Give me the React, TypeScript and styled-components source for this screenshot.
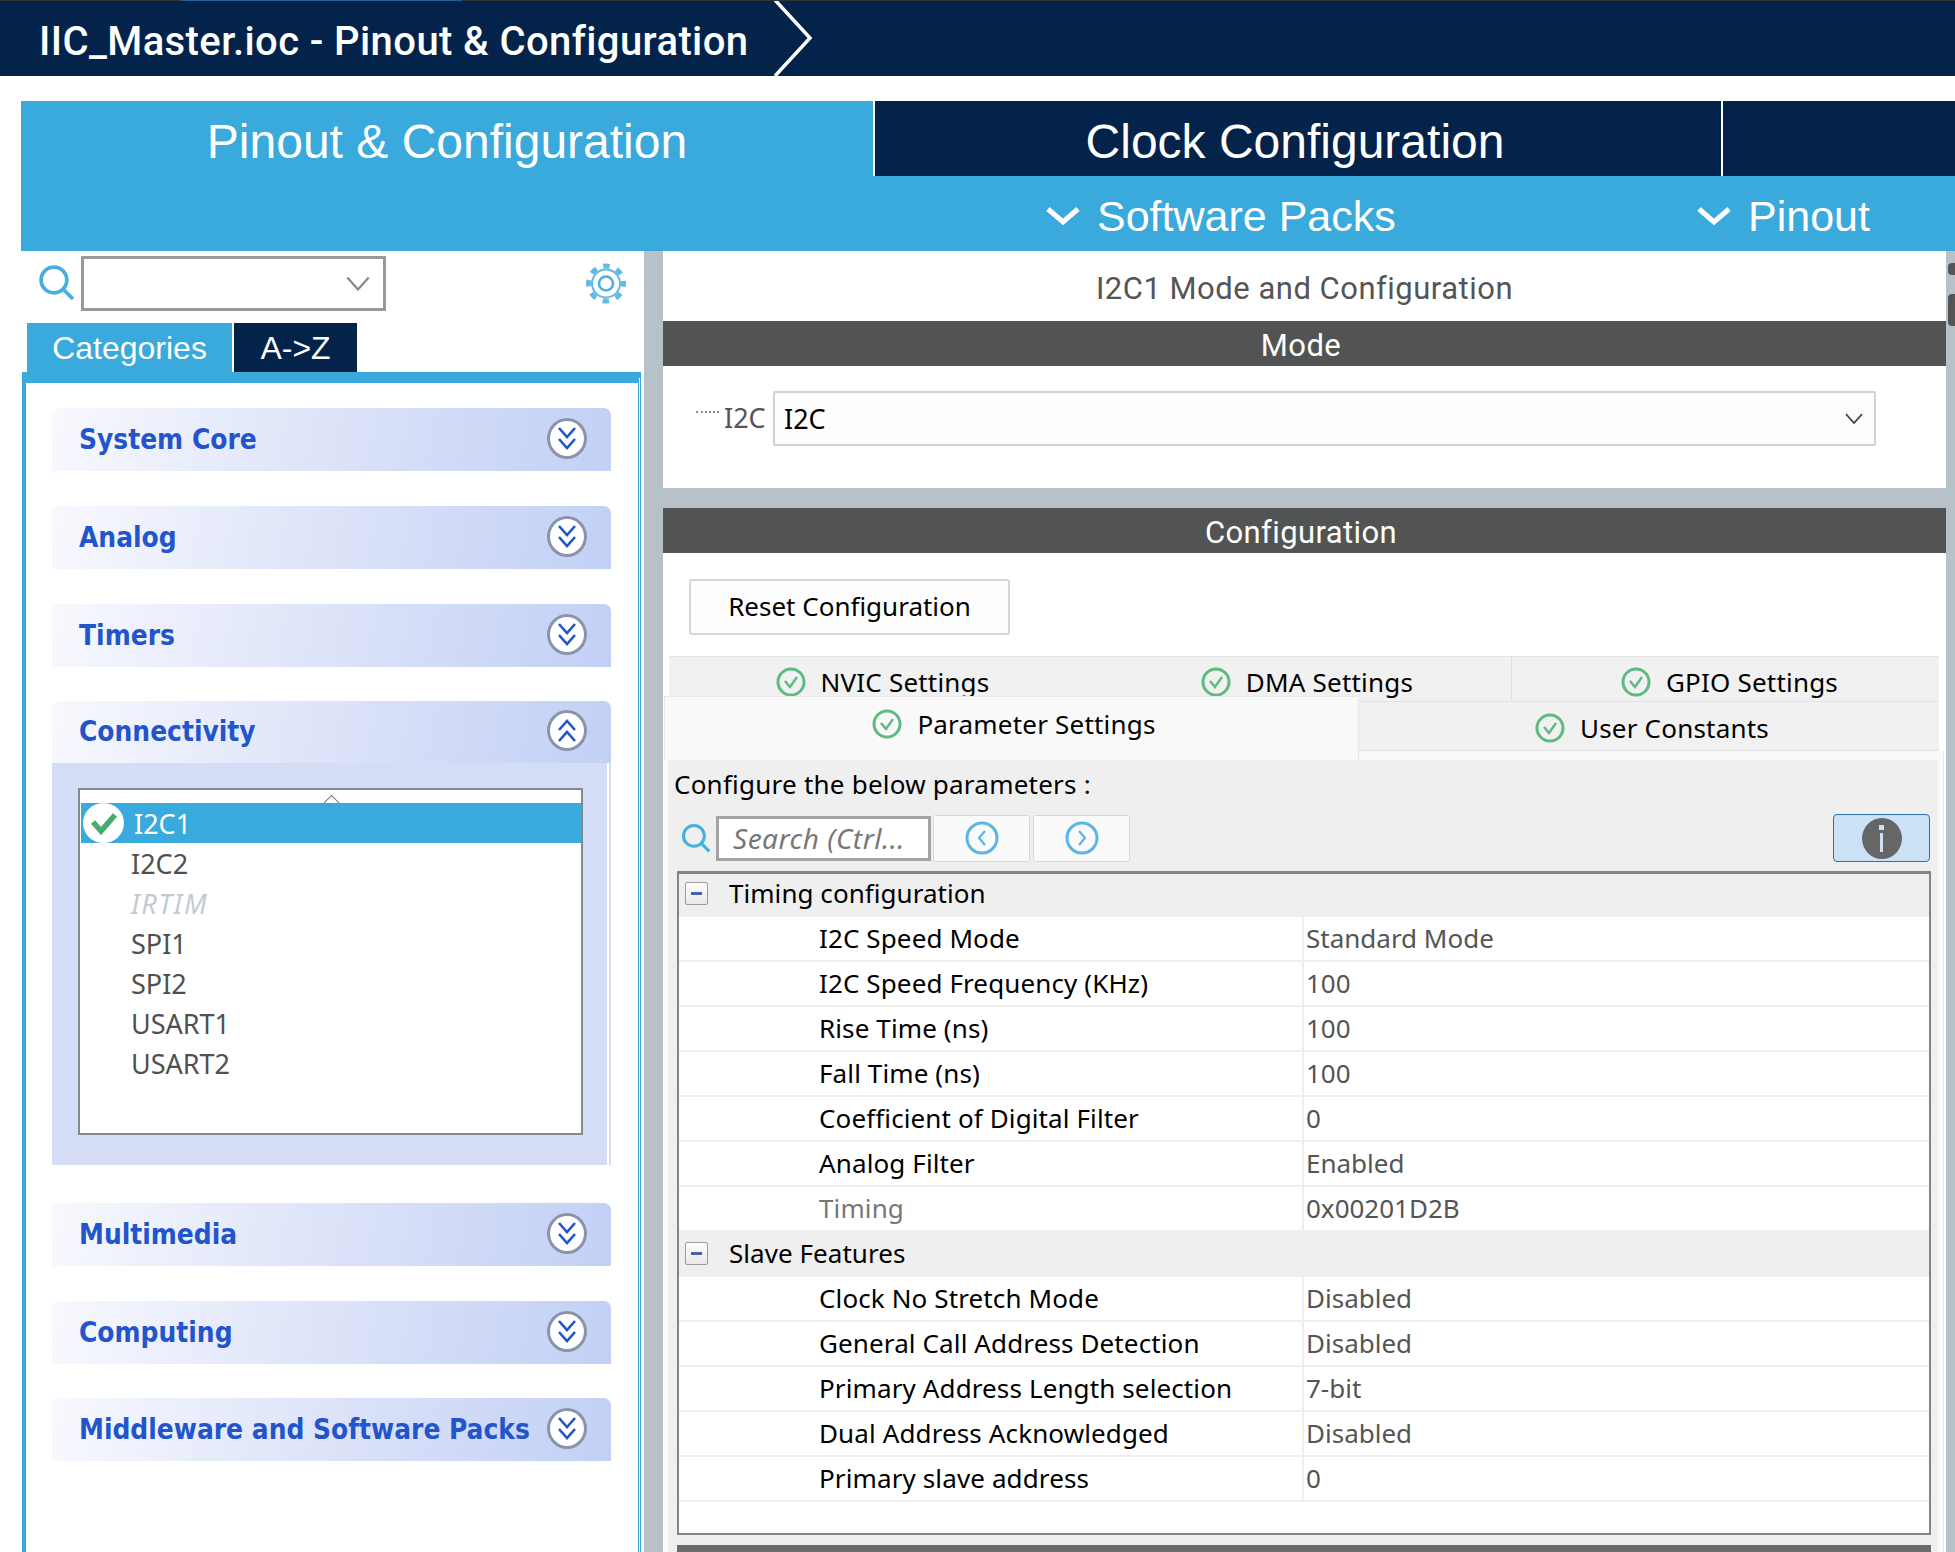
import React from "react";
import styled, { createGlobalStyle } from "styled-components";

const NAVY = "#03234b";
const BLUE = "#3aa9dc";
const SPLIT = "#b7c2c8";
const UI_FONT = '"Noto Sans", "DejaVu Sans", sans-serif';
const HEAD_FONT = '"Liberation Sans", Arial, sans-serif';

interface ParamRow {
  label: string;
  value: string;
  muted?: boolean;
}

const timingRows: ParamRow[] = [
  { label: "I2C Speed Mode", value: "Standard Mode" },
  { label: "I2C Speed Frequency (KHz)", value: "100" },
  { label: "Rise Time (ns)", value: "100" },
  { label: "Fall Time (ns)", value: "100" },
  { label: "Coefficient of Digital Filter", value: "0" },
  { label: "Analog Filter", value: "Enabled" },
  { label: "Timing", value: "0x00201D2B", muted: true },
];

const slaveRows: ParamRow[] = [
  { label: "Clock No Stretch Mode", value: "Disabled" },
  { label: "General Call Address Detection", value: "Disabled" },
  { label: "Primary Address Length selection", value: "7-bit" },
  { label: "Dual Address Acknowledged", value: "Disabled" },
  { label: "Primary slave address", value: "0" },
];

const GlobalStyle = createGlobalStyle`
  html, body {
    margin: 0;
    padding: 0;
    background: #fff;
  }
  * {
    box-sizing: border-box;
  }
`;

const CheckRing = () => (
  <svg width="30" height="30" viewBox="0 0 30 30" fill="none">
    <circle cx="15" cy="15" r="13" stroke="#5dba80" strokeWidth="3" />
    <polyline points="9,14 14,20 21,10" stroke="#5dba80" strokeWidth="2.4" />
  </svg>
);

const Magnifier = ({ size }: { size: number }) => (
  <svg width={size} height={size} viewBox="0 0 36 36" fill="none">
    <circle cx="15.5" cy="15.5" r="12.5" stroke="#46aee0" strokeWidth="3.6" />
    <line x1="25" y1="25" x2="34" y2="34" stroke="#46aee0" strokeWidth="3.6" />
  </svg>
);

const Gear = () => (
  <svg width="40" height="41" viewBox="0 0 40 41" fill="none">
    <circle cx="20" cy="20.5" r="17.5" stroke="#62b9e4" strokeWidth="5" strokeDasharray="6.5 7.24" strokeDashoffset="3.25" />
    <circle cx="20" cy="20.5" r="14" stroke="#62b9e4" strokeWidth="2" />
    <circle cx="20" cy="20.5" r="7" stroke="#4db0e0" strokeWidth="2.6" />
  </svg>
);

const RoundToggle = ({ open }: { open: boolean }) => (
  <ToggleDisc>
    <svg width="22" height="26" viewBox="0 0 22 26" fill="none" stroke="#2255cc" strokeWidth="2.6">
      {open ? (
        <>
          <polyline points="3,12 11,3 19,12" />
          <polyline points="3,23 11,14 19,23" />
        </>
      ) : (
        <>
          <polyline points="3,3 11,12 19,3" />
          <polyline points="3,14 11,23 19,14" />
        </>
      )}
    </svg>
  </ToggleDisc>
);

const DownMark = () => (
  <svg width="36" height="22" viewBox="0 0 36 22" fill="none">
    <polyline points="3,4 18,17 33,4" stroke="#fff" strokeWidth="5" />
  </svg>
);

const ThinChevron = ({ color, width = 18 }: { color: string; width?: number }) => (
  <svg width={width} height={width * 0.62} viewBox="0 0 18 11" fill="none">
    <polyline points="1,1 9,10 17,1" stroke={color} strokeWidth="1.7" />
  </svg>
);

const NavIcon = ({ back }: { back?: boolean }) => (
  <svg width="34" height="36" viewBox="0 0 34 36" fill="none">
    <circle cx="17" cy="18" r="15" stroke="#5ab6e2" strokeWidth="3" />
    <polyline points={back ? "20,11 14,18 20,25" : "14,11 20,18 14,25"} stroke="#5ab6e2" strokeWidth="2.2" />
  </svg>
);

const Section: React.FC<{ title: string; open?: boolean; children?: React.ReactNode }> = ({
  title,
  open = false,
  children,
}) => (
  <>
    <SectionHead $open={open}>
      <SectionTitle>{title}</SectionTitle>
      <RoundToggle open={open} />
    </SectionHead>
    {children}
  </>
);

const ParamTable: React.FC<{ rows: ParamRow[] }> = ({ rows }) => (
  <>
    {rows.map((row) => (
      <TableRow key={row.label}>
        <ParamLabel $muted={row.muted}>{row.label}</ParamLabel>
        <ParamValue>{row.value}</ParamValue>
      </TableRow>
    ))}
  </>
);

const App: React.FC = () => {
  return (
    <Page>
      <GlobalStyle />
      <TopBar>
        <TopTitle>IIC_Master.ioc - Pinout &amp; Configuration</TopTitle>
        <svg width="42" height="76" viewBox="0 0 42 76" fill="none">
          <polyline points="3,0 38,38 3,76" stroke="#fff" strokeWidth="3.5" />
        </svg>
      </TopBar>

      <TabsBlock>
        <MainTabs>
          <MainTab $active>Pinout &amp; Configuration</MainTab>
          <MainTab>Clock Configuration</MainTab>
          <MainTabRest />
        </MainTabs>
        <SubBar>
          <SubItem $width={651}>
            <DownMark />
            Software Packs
          </SubItem>
          <SubItem $width={236}>
            <DownMark />
            Pinout
          </SubItem>
        </SubBar>
      </TabsBlock>

      <Main>
        <LeftPanel>
          <SearchRow>
            <Magnifier size={37} />
            <ComboBox>
              <ThinChevron color="#8a8a8a" width={24} />
            </ComboBox>
            <GearSlot>
              <Gear />
            </GearSlot>
          </SearchRow>
          <ViewTabs>
            <ViewTab $active $width={205}>Categories</ViewTab>
            <ViewTab $width={123}>A-&gt;Z</ViewTab>
          </ViewTabs>
          <TreePanel>
            <Section title="System Core" />
            <Section title="Analog" />
            <Section title="Timers" />
            <Section title="Connectivity" open>
              <SectionBody>
                <ListBox>
                  <ListCaret />
                  <ListRowSelected>
                    <WhiteCheck>
                      <svg width="30" height="26" viewBox="0 0 30 26" fill="none">
                        <polyline points="4,12 12,21 26,5" stroke="#45ac6c" strokeWidth="5.5" />
                      </svg>
                    </WhiteCheck>
                    I2C1
                  </ListRowSelected>
                  <ListRow>I2C2</ListRow>
                  <ListRow $disabled>IRTIM</ListRow>
                  <ListRow>SPI1</ListRow>
                  <ListRow>SPI2</ListRow>
                  <ListRow>USART1</ListRow>
                  <ListRow>USART2</ListRow>
                </ListBox>
              </SectionBody>
            </Section>
            <Section title="Multimedia" />
            <Section title="Computing" />
            <Section title="Middleware and Software Packs" />
          </TreePanel>
        </LeftPanel>

        <RightPane>
          <PaneTitle>I2C1 Mode and Configuration</PaneTitle>
          <DarkHeader>Mode</DarkHeader>
          <ModeArea>
            <DotLeader />
            <ModeLabel>I2C</ModeLabel>
            <ModeSelect>
              I2C
              <ThinChevron color="#444" />
            </ModeSelect>
          </ModeArea>
          <PaneGap />
          <DarkHeader>Configuration</DarkHeader>
          <ConfigArea>
            <ResetButton>Reset Configuration</ResetButton>
            <TabsTop>
              <SettingsTab $width={419} $pad={8}>
                <CheckRing />
                NVIC Settings
              </SettingsTab>
              <SettingsTab $width={423} $pad={15}>
                <CheckRing />
                DMA Settings
              </SettingsTab>
              <SettingsTab $width={428} $pad={8} $divided>
                <CheckRing />
                GPIO Settings
              </SettingsTab>
            </TabsTop>
            <TabsBottom>
              <ActiveTab>
                <CheckRing />
                Parameter Settings
              </ActiveTab>
              <PlainTab>
                <CheckRing />
                User Constants
              </PlainTab>
            </TabsBottom>
            <TabPage>
              <TabPageInner>
                <ConfigureText>Configure the below parameters :</ConfigureText>
                <Toolbar>
                  <Magnifier size={30} />
                  <SearchField>Search (Ctrl...</SearchField>
                  <NavButton>
                    <NavIcon back />
                  </NavButton>
                  <NavButton>
                    <NavIcon />
                  </NavButton>
                  <InfoButton>
                    <InfoDisc>
                      <InfoDot />
                      <InfoStem />
                    </InfoDisc>
                  </InfoButton>
                </Toolbar>
                <Table>
                  <GroupRow>
                    <MinusBox />
                    <GroupText>Timing configuration</GroupText>
                  </GroupRow>
                  <ParamTable rows={timingRows} />
                  <GroupRow>
                    <MinusBox />
                    <GroupText>Slave Features</GroupText>
                  </GroupRow>
                  <ParamTable rows={slaveRows} />
                </Table>
                <BottomBar />
              </TabPageInner>
            </TabPage>
          </ConfigArea>
        </RightPane>

        <ScrollGutter>
          <ScrollDot />
          <ScrollThumb />
        </ScrollGutter>
      </Main>
    </Page>
  );
};

const Page = styled.div`
  position: relative;
  width: 1955px;
  height: 1552px;
  overflow: hidden;
  display: flex;
  flex-direction: column;
  background: #fff;
  font-family: ${UI_FONT};
`;

const TopBar = styled.header`
  position: relative;
  height: 76px;
  background: ${NAVY};
  display: flex;
  align-items: center;
  padding-left: 39px;
  gap: 24px;
  flex-shrink: 0;
  &::before {
    content: "";
    position: absolute;
    left: 0;
    right: 0;
    top: 0;
    height: 1px;
    background: linear-gradient(to right, #333 181px, #1f5f96 181px, #1f5f96 462px, #333 462px);
  }
`;

const TopTitle = styled.h1`
  margin: 6px 0 0;
  font: 500 40px Roboto, sans-serif;
  letter-spacing: 0.4px;
  color: #fff;
  white-space: nowrap;
`;

const TabsBlock = styled.div`
  margin: 25px 0 0 21px;
  flex-shrink: 0;
`;

const MainTabs = styled.div`
  display: flex;
  height: 75px;
  background: ${BLUE};
`;

const MainTab = styled.div<{ $active?: boolean }>`
  width: ${(p) => (p.$active ? 852 : 846)}px;
  margin-right: 2px;
  padding-right: ${(p) => (p.$active ? 0 : 6)}px;
  background: ${(p) => (p.$active ? BLUE : NAVY)};
  color: #fff;
  font: 400 48px/81px ${HEAD_FONT};
  text-align: center;
  box-shadow: 2px 0 0 #fff;
`;

const MainTabRest = styled.div`
  flex: 1;
  background: ${NAVY};
`;

const SubBar = styled.div`
  height: 75px;
  background: ${BLUE};
  display: flex;
  padding: 5px 0 0 1024px;
`;

const SubItem = styled.div<{ $width: number }>`
  width: ${(p) => p.$width}px;
  flex: 0 0 auto;
  display: flex;
  align-items: center;
  gap: 16px;
  color: #fff;
  font: 400 43px ${HEAD_FONT};
  white-space: nowrap;
  & > svg {
    flex-shrink: 0;
  }
`;

const Main = styled.div`
  flex: 1;
  min-height: 0;
  display: flex;
  padding-left: 21px;
`;

const LeftPanel = styled.aside`
  width: 623px;
  flex-shrink: 0;
  display: flex;
  flex-direction: column;
  margin-right: 19px;
  position: relative;
  background: #fff;
  box-shadow: 19px 0 0 ${SPLIT};
`;

const SearchRow = styled.div`
  height: 72px;
  display: flex;
  align-items: flex-start;
  padding: 5px 18px 0 17px;
  & > svg {
    margin-top: 8px;
    flex-shrink: 0;
  }
`;

const ComboBox = styled.div`
  width: 305px;
  height: 55px;
  margin-left: 6px;
  border: 3px solid #959a9e;
  display: flex;
  align-items: center;
  justify-content: flex-end;
  padding-right: 13px;
`;

const GearSlot = styled.div`
  margin-left: auto;
  margin-top: 7px;
  height: 41px;
`;

const ViewTabs = styled.div`
  display: flex;
  gap: 2px;
  padding-left: 6px;
  height: 49px;
  flex-shrink: 0;
`;

const ViewTab = styled.div<{ $active?: boolean; $width: number }>`
  width: ${(p) => p.$width}px;
  background: ${(p) => (p.$active ? BLUE : NAVY)};
  color: #fff;
  font: 400 32px/50px ${HEAD_FONT};
  text-align: center;
`;

const TreePanel = styled.div`
  flex: 1;
  margin-left: 1px;
  width: 619px;
  background: #fff;
  border-top: 11px solid ${BLUE};
  border-left: 4px solid ${BLUE};
  border-right: 3px double ${BLUE};
  padding: 25px 26px 0;
`;

const SectionHead = styled.div<{ $open: boolean }>`
  width: 559px;
  height: ${(p) => (p.$open ? 62 : 63)}px;
  margin-top: ${(p) => (p.$open ? -1 : 0)}px;
  margin-bottom: ${(p) => (p.$open ? 0 : 35)}px;
  border-radius: 7px 7px 0 0;
  background: linear-gradient(100deg, #f8f9fe 0%, #dfe5f9 45%, #c2d0f5 100%);
  display: flex;
  align-items: center;
  justify-content: space-between;
  padding: 0 24px 0 27px;
  &:last-child {
    margin-top: -1px;
  }
`;

const SectionTitle = styled.span`
  margin-bottom: 1px;
  font: 700 27.8px "DejaVu Sans Condensed", "DejaVu Sans", sans-serif;
  font-stretch: condensed;
  color: #2255cc;
  white-space: nowrap;
`;

const ToggleDisc = styled.span`
  width: 40px;
  height: 41px;
  border-radius: 50%;
  border: 3px solid #8a93a8;
  background: #fff;
  display: flex;
  align-items: center;
  justify-content: center;
  flex-shrink: 0;
  margin-top: -3px;
`;

const SectionBody = styled.div`
  width: 559px;
  height: 402px;
  margin-bottom: 38px;
  padding: 25px 0 0 26px;
  background: linear-gradient(to right, #d5ddf6 555px, #fff 555px, #fff 557px, #d5ddf6 557px);
`;

const ListBox = styled.div`
  position: relative;
  width: 505px;
  height: 347px;
  background: #fff;
  border: 2px solid #84888f;
  padding: 13px 0 0 1px;
`;

const ListCaret = styled.span`
  position: absolute;
  left: 246px;
  top: 7px;
  width: 11px;
  height: 11px;
  border-left: 1.5px solid #777;
  border-top: 1.5px solid #777;
  transform: rotate(45deg);
`;

const ListRow = styled.div<{ $disabled?: boolean }>`
  height: 40px;
  padding-left: 50px;
  font: ${(p) => (p.$disabled ? "italic" : "normal")} 400 27px/41px ${UI_FONT};
  letter-spacing: ${(p) => (p.$disabled ? 1.6 : 0)}px;
  color: ${(p) => (p.$disabled ? "#c0cbd2" : "#505050")};
`;

const ListRowSelected = styled.div`
  position: relative;
  height: 40px;
  display: flex;
  align-items: center;
  gap: 10px;
  padding-left: 2px;
  background: ${BLUE};
  color: #fff;
  font: 400 27px/41px ${UI_FONT};
`;

const WhiteCheck = styled.span`
  width: 41px;
  height: 40px;
  border-radius: 50%;
  background: #fff;
  display: flex;
  align-items: center;
  justify-content: center;
`;

const RightPane = styled.main`
  width: 1283px;
  flex-shrink: 0;
  display: flex;
  flex-direction: column;
  background: #fff;
`;

const PaneTitle = styled.div`
  height: 70px;
  text-align: center;
  font: 400 31px/75px Roboto, sans-serif;
  letter-spacing: 0.5px;
  color: #555;
`;

const DarkHeader = styled.div`
  height: 45px;
  flex-shrink: 0;
  padding-right: 7px;
  background: #525453;
  color: #fff;
  text-align: center;
  font: 400 31px/50px Roboto, sans-serif;
  letter-spacing: 0.4px;
`;

const ModeArea = styled.div`
  height: 122px;
  flex-shrink: 0;
  display: flex;
  align-items: flex-start;
  padding: 25px 0 0 33px;
`;

const DotLeader = styled.span`
  width: 23px;
  margin-top: 20px;
  border-top: 2px dotted #888;
`;

const ModeLabel = styled.span`
  margin: 7px 0 0 5px;
  width: 49px;
  font: 400 27px/40px ${UI_FONT};
  color: #555;
`;

const ModeSelect = styled.div`
  width: 1103px;
  height: 55px;
  border: 2px solid #d2d2d2;
  border-radius: 2px;
  background: #fdfdfd;
  display: flex;
  align-items: center;
  justify-content: space-between;
  padding: 0 11px 0 9px;
  font: 400 27px ${UI_FONT};
  color: #000;
`;

const PaneGap = styled.div`
  height: 20px;
  flex-shrink: 0;
  background: ${SPLIT};
`;

const ConfigArea = styled.div`
  flex: 1;
  min-height: 0;
  display: flex;
  flex-direction: column;
  padding-top: 26px;
`;

const ResetButton = styled.div`
  width: 321px;
  height: 56px;
  margin-left: 26px;
  border: 2px solid #d6d6d6;
  border-radius: 3px;
  background: #fdfdfd;
  font: 400 26px/50px ${UI_FONT};
  color: #000;
  text-align: center;
  flex-shrink: 0;
`;

const TabsTop = styled.div`
  display: flex;
  margin: 21px 0 0 6px;
  width: 1270px;
  height: 45px;
  flex-shrink: 0;
  background: #f1f1f1;
  border-top: 1px solid #e4e4e4;
`;

const TabBase = styled.div`
  display: flex;
  align-items: center;
  justify-content: center;
  gap: 15px;
  font: 400 26px ${UI_FONT};
  letter-spacing: 0.2px;
  color: #000;
  white-space: nowrap;
`;

const SettingsTab = styled(TabBase)<{ $width: number; $pad: number; $divided?: boolean }>`
  width: ${(p) => p.$width}px;
  border-left: ${(p) => (p.$divided ? "1px solid #e2e2e2" : "none")};
  padding: 6px 0 0 ${(p) => p.$pad}px;
`;

const TabsBottom = styled.div`
  position: relative;
  z-index: 1;
  display: flex;
  align-items: flex-start;
  height: 64px;
  margin: -5px 0 -9px 1px;
  flex-shrink: 0;
`;

const ActiveTab = styled(TabBase)`
  width: 695px;
  height: 64px;
  background: #f9f9f9;
  border: 1px solid #e8e8e8;
  border-bottom: none;
  padding: 0 0 9px 5px;
`;

const PlainTab = styled(TabBase)`
  width: 580px;
  height: 50px;
  margin-top: 5px;
  background: #f1f1f1;
  border-top: 1px solid #e2e2e2;
  border-bottom: 1px solid #e2e2e2;
  padding: 3px 0 0 6px;
`;

const TabPage = styled.div`
  flex: 1;
  min-height: 0;
  width: 1280px;
  margin-left: 1px;
  padding: 9px 5px 0 4px;
  background: #f9f9f9;
  border-right: 1px solid #e8e8e8;
`;

const TabPageInner = styled.div`
  height: 100%;
  background: #efefef;
  padding: 0 8px 0 9px;
`;

const ConfigureText = styled.div`
  margin-left: -3px;
  height: 54px;
  font: 400 26px/48px ${UI_FONT};
  letter-spacing: 0.23px;
  color: #000;
`;

const Toolbar = styled.div`
  display: flex;
  align-items: center;
  height: 48px;
  margin-left: 4px;
  position: relative;
  & > svg {
    margin-right: 5px;
    flex-shrink: 0;
  }
`;

const SearchField = styled.div`
  width: 215px;
  height: 45px;
  margin-right: 2px;
  border: 3px solid #a3a3a3;
  background: #fff;
  padding-left: 14px;
  font: italic 400 28px/38px ${UI_FONT};
  letter-spacing: 0.5px;
  color: #777;
  white-space: nowrap;
  overflow: hidden;
`;

const NavButton = styled.div`
  width: 97px;
  height: 47px;
  margin-right: 3px;
  border: 1px solid #d6d6d6;
  border-radius: 3px;
  background: #fafafa;
  display: flex;
  align-items: center;
  justify-content: center;
`;

const InfoButton = styled.div`
  width: 97px;
  height: 48px;
  margin-left: auto;
  border: 1.5px solid #2a70b0;
  border-radius: 4px;
  background: #cae1f6;
  display: flex;
  align-items: center;
  justify-content: center;
`;

const InfoDisc = styled.span`
  width: 40px;
  height: 41px;
  border-radius: 50%;
  background: #666;
  display: flex;
  flex-direction: column;
  align-items: center;
  padding-top: 7px;
  gap: 3px;
`;

const InfoDot = styled.span`
  width: 5px;
  height: 5px;
  background: #cae1f6;
`;

const InfoStem = styled.span`
  width: 3px;
  height: 19px;
  background: #cae1f6;
`;

const Table = styled.div`
  margin-top: 9px;
  width: 1254px;
  height: 664px;
  border: 2px solid #7f858d;
  border-top-width: 3px;
  background: #fff;
`;

const GroupRow = styled.div`
  height: 43px;
  background: #efefef;
  display: flex;
  align-items: center;
  padding: 0 0 4px 6px;
  gap: 21px;
  & ~ & {
    height: 47px;
    margin-top: -2px;
    padding-bottom: 0;
  }
`;

const GroupText = styled.span`
  margin-bottom: 2px;
  font: 400 26px ${UI_FONT};
  letter-spacing: 0.05px;
  color: #000;
`;

const MinusBox = styled.span`
  position: relative;
  width: 23px;
  height: 23px;
  border: 1px solid #9a9a9a;
  border-radius: 2px;
  background: linear-gradient(#fff, #e9e9e9);
  flex-shrink: 0;
  &::after {
    content: "";
    position: absolute;
    left: 5px;
    top: 9px;
    width: 11px;
    height: 3px;
    background: #4a62ad;
  }
`;

const TableRow = styled.div`
  height: 45px;
  display: grid;
  grid-template-columns: 623px 1fr;
  border-bottom: 2px solid #efefef;
`;

const ParamLabel = styled.div<{ $muted?: boolean }>`
  padding-left: 140px;
  font: 400 26px/43px ${UI_FONT};
  letter-spacing: 0.12px;
  color: ${(p) => (p.$muted ? "#777" : "#000")};
  white-space: nowrap;
`;

const ParamValue = styled.div`
  border-left: 2px solid #efefef;
  padding-left: 2px;
  font: 400 26px/43px ${UI_FONT};
  color: #555;
`;

const BottomBar = styled.div`
  margin-top: 10px;
  width: 1254px;
  height: 7px;
  background: #6b6b6b;
`;

const ScrollGutter = styled.div`
  position: relative;
  flex: 1;
  background: ${SPLIT};
`;

const ScrollDot = styled.span`
  position: absolute;
  left: 2px;
  top: 12px;
  width: 7px;
  height: 12px;
  border-radius: 4px 0 0 4px;
  background: #555;
`;

const ScrollThumb = styled.span`
  position: absolute;
  left: 2px;
  top: 43px;
  width: 7px;
  height: 32px;
  border-radius: 4px 0 0 4px;
  background: #555;
`;

export default App;
